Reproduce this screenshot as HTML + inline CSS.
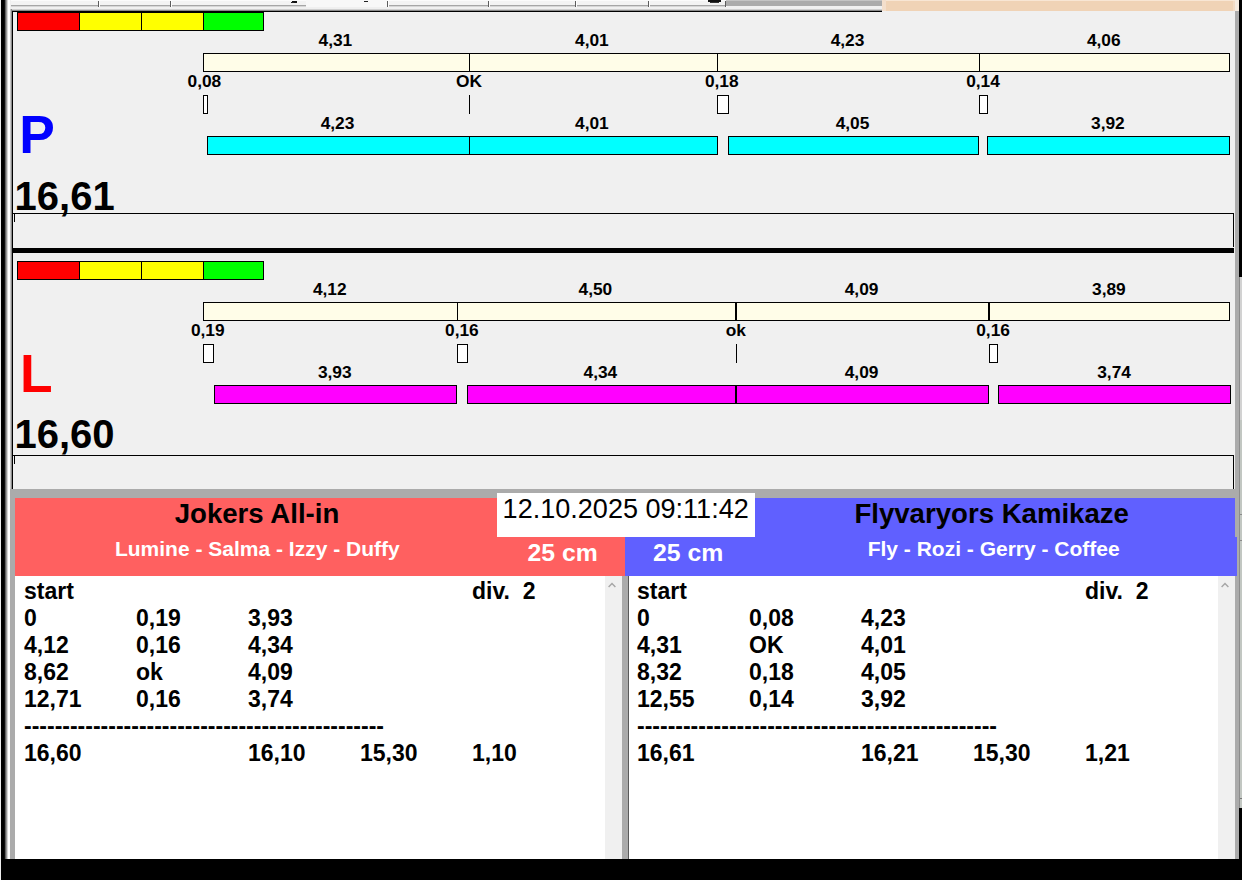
<!DOCTYPE html>
<html><head><meta charset="utf-8"><title>Timing</title>
<style>
html,body{margin:0;padding:0;background:#f0f0f0;}
body{width:1242px;height:880px;position:relative;overflow:hidden;font-family:"Liberation Sans",Arial,sans-serif;}
body>div,body>span,body>svg{position:absolute;display:block;}
.b{border:1px solid #000;}
.t{line-height:1;white-space:pre;}
</style></head><body>
<div style="left:0px;top:0px;width:1242px;height:880px;background:#f0f0f0;"></div>
<div style="left:11px;top:0px;width:716px;height:7px;background:#f3f3f3;"></div>
<div style="left:11px;top:0px;width:716px;height:1px;background:#fbfbfb;"></div>
<div style="left:11px;top:5px;width:716px;height:1px;background:#a6a6a6;"></div>
<div style="left:11px;top:6px;width:716px;height:1px;background:#d6d6d6;"></div>
<div style="left:306px;top:0px;width:81px;height:7px;background:#f8f8f8;"></div>
<div style="left:98px;top:1px;width:1px;height:6px;background:#5c5c5c;"></div>
<div style="left:99px;top:0px;width:1px;height:7px;background:#fdfdfd;"></div>
<div style="left:170px;top:1px;width:1px;height:6px;background:#5c5c5c;"></div>
<div style="left:171px;top:0px;width:1px;height:7px;background:#fdfdfd;"></div>
<div style="left:387px;top:1px;width:1px;height:6px;background:#5c5c5c;"></div>
<div style="left:388px;top:0px;width:1px;height:7px;background:#fdfdfd;"></div>
<div style="left:488px;top:1px;width:1px;height:6px;background:#5c5c5c;"></div>
<div style="left:489px;top:0px;width:1px;height:7px;background:#fdfdfd;"></div>
<div style="left:575px;top:1px;width:1px;height:6px;background:#5c5c5c;"></div>
<div style="left:576px;top:0px;width:1px;height:7px;background:#fdfdfd;"></div>
<div style="left:648px;top:1px;width:1px;height:6px;background:#5c5c5c;"></div>
<div style="left:649px;top:0px;width:1px;height:7px;background:#fdfdfd;"></div>
<div style="left:725px;top:1px;width:1px;height:6px;background:#5c5c5c;"></div>
<div style="left:726px;top:0px;width:1px;height:7px;background:#fdfdfd;"></div>
<div style="left:726px;top:0px;width:156px;height:6px;background:#ababab;"></div>
<div style="left:726px;top:0px;width:156px;height:1px;background:#c4c4c4;"></div>
<div style="left:882px;top:0px;width:353px;height:11px;background:#f0d3b6;"></div>
<div style="left:882px;top:0px;width:353px;height:1px;background:#f8e6d4;"></div>
<div style="left:882px;top:0px;width:4px;height:11px;background:#f4dfcc;"></div>
<div style="left:1235px;top:0px;width:4px;height:11px;background:#f6ebe0;"></div>
<div style="left:1233px;top:1px;width:2px;height:10px;background:#f3dcc6;"></div>
<div style="left:292px;top:1px;width:5px;height:2px;background:#111;"></div>
<div style="left:291px;top:2px;width:3px;height:1px;background:#222;"></div>
<div style="left:364px;top:1px;width:4px;height:1px;background:#222;"></div>
<div style="left:708px;top:0px;width:13px;height:2px;background:#111;"></div>
<div style="left:710px;top:2px;width:9px;height:1px;background:#333;"></div>
<div style="left:10px;top:9px;width:872px;height:1px;background:#cfcfcf;"></div>
<div style="left:10px;top:10px;width:872px;height:1px;background:#8a8a8a;"></div>
<div style="left:12px;top:11px;width:870px;height:1px;background:#000;"></div>
<div style="left:0px;top:0px;width:1px;height:880px;background:#ededed;"></div>
<div style="left:1px;top:0px;width:3px;height:880px;background:#000;"></div>
<div style="left:4px;top:0px;width:1px;height:880px;background:#0e0e0e;"></div>
<div style="left:5px;top:0px;width:1px;height:880px;background:#606060;"></div>
<div style="left:6px;top:0px;width:1px;height:880px;background:#989898;"></div>
<div style="left:7px;top:0px;width:1px;height:880px;background:#d4d4d4;"></div>
<div style="left:8px;top:0px;width:2px;height:880px;background:#fff;"></div>
<div style="left:10px;top:9px;width:1px;height:480px;background:#c6c6c6;"></div>
<div style="left:11px;top:9px;width:1px;height:480px;background:#8c8c8c;"></div>
<div style="left:12px;top:11px;width:1px;height:478px;background:#000;"></div>
<div style="left:1235px;top:11px;width:4px;height:848px;background:#ababab;"></div>
<div style="left:1239px;top:0px;width:3px;height:277px;background:#000;"></div>
<div style="left:1239px;top:277px;width:1px;height:531px;background:#8c8c8c;"></div>
<div style="left:1240px;top:277px;width:2px;height:143px;background:#d2d2d2;"></div>
<div style="left:1240px;top:420px;width:2px;height:388px;background:#c2c7c2;"></div>
<div style="left:1240px;top:514px;width:2px;height:1px;background:#8a8a8a;"></div>
<div style="left:1240px;top:540px;width:2px;height:1px;background:#8a8a8a;"></div>
<div style="left:1240px;top:798px;width:2px;height:1px;background:#777;"></div>
<div style="left:1239px;top:808px;width:3px;height:72px;background:#000;"></div>
<div class="b" style="left:17px;top:12px;width:61px;height:17px;background:#ff0000"></div>
<div class="b" style="left:79px;top:12px;width:61px;height:17px;background:#ffff00"></div>
<div class="b" style="left:141px;top:12px;width:61px;height:17px;background:#ffff00"></div>
<div class="b" style="left:203px;top:12px;width:59px;height:17px;background:#00ff00"></div>
<div class="b" style="left:203px;top:53px;width:265px;height:17px;background:#fffde8"></div>
<div class="b" style="left:469px;top:53px;width:247px;height:17px;background:#fffde8"></div>
<div class="b" style="left:717px;top:53px;width:261px;height:17px;background:#fffde8"></div>
<div class="b" style="left:979px;top:53px;width:249px;height:17px;background:#fffde8"></div>
<div class="b" style="left:203px;top:95px;width:3px;height:17px;background:#fff"></div>
<div style="left:469px;top:95px;width:1px;height:19px;background:#000;"></div>
<div class="b" style="left:717px;top:95px;width:10px;height:17px;background:#fff"></div>
<div class="b" style="left:979px;top:95px;width:7px;height:17px;background:#fff"></div>
<div class="b" style="left:207px;top:136px;width:261px;height:17px;background:#00ffff"></div>
<div class="b" style="left:469px;top:136px;width:247px;height:17px;background:#00ffff"></div>
<div class="b" style="left:728px;top:136px;width:249px;height:17px;background:#00ffff"></div>
<div class="b" style="left:987px;top:136px;width:241px;height:17px;background:#00ffff"></div>
<span class="t " style="left:135.39999999999998px;width:400px;text-align:center;top:31.63px;font-size:17.33px;color:#000;font-weight:bold;">4,31</span>
<span class="t " style="left:391.9px;width:400px;text-align:center;top:31.63px;font-size:17.33px;color:#000;font-weight:bold;">4,01</span>
<span class="t " style="left:647.5px;width:400px;text-align:center;top:31.63px;font-size:17.33px;color:#000;font-weight:bold;">4,23</span>
<span class="t " style="left:903.8px;width:400px;text-align:center;top:31.63px;font-size:17.33px;color:#000;font-weight:bold;">4,06</span>
<span class="t " style="left:4.400000000000006px;width:400px;text-align:center;top:73.13px;font-size:17.33px;color:#000;font-weight:bold;">0,08</span>
<span class="t " style="left:269px;width:400px;text-align:center;top:73.13px;font-size:17.33px;color:#000;font-weight:bold;">OK</span>
<span class="t " style="left:521.8px;width:400px;text-align:center;top:73.13px;font-size:17.33px;color:#000;font-weight:bold;">0,18</span>
<span class="t " style="left:783px;width:400px;text-align:center;top:73.13px;font-size:17.33px;color:#000;font-weight:bold;">0,14</span>
<span class="t " style="left:137.5px;width:400px;text-align:center;top:114.93px;font-size:17.33px;color:#000;font-weight:bold;">4,23</span>
<span class="t " style="left:391.9px;width:400px;text-align:center;top:114.93px;font-size:17.33px;color:#000;font-weight:bold;">4,01</span>
<span class="t " style="left:652.5px;width:400px;text-align:center;top:114.93px;font-size:17.33px;color:#000;font-weight:bold;">4,05</span>
<span class="t " style="left:907.9000000000001px;width:400px;text-align:center;top:114.93px;font-size:17.33px;color:#000;font-weight:bold;">3,92</span>
<div class="b" style="left:17px;top:261px;width:61px;height:17px;background:#ff0000"></div>
<div class="b" style="left:79px;top:261px;width:61px;height:17px;background:#ffff00"></div>
<div class="b" style="left:141px;top:261px;width:61px;height:17px;background:#ffff00"></div>
<div class="b" style="left:203px;top:261px;width:59px;height:17px;background:#00ff00"></div>
<div class="b" style="left:203px;top:302px;width:253px;height:17px;background:#fffde8"></div>
<div class="b" style="left:457px;top:302px;width:278px;height:17px;background:#fffde8"></div>
<div class="b" style="left:736px;top:302px;width:252px;height:17px;background:#fffde8"></div>
<div class="b" style="left:989px;top:302px;width:239px;height:17px;background:#fffde8"></div>
<div class="b" style="left:203px;top:344px;width:9px;height:17px;background:#fff"></div>
<div class="b" style="left:457px;top:344px;width:9px;height:17px;background:#fff"></div>
<div style="left:736px;top:344px;width:1px;height:19px;background:#000;"></div>
<div class="b" style="left:989px;top:344px;width:7px;height:17px;background:#fff"></div>
<div class="b" style="left:214px;top:385px;width:241px;height:17px;background:#ff00ff"></div>
<div class="b" style="left:467px;top:385px;width:268px;height:17px;background:#ff00ff"></div>
<div class="b" style="left:736px;top:385px;width:251px;height:17px;background:#ff00ff"></div>
<div class="b" style="left:998px;top:385px;width:231px;height:17px;background:#ff00ff"></div>
<span class="t " style="left:129.8px;width:400px;text-align:center;top:280.63px;font-size:17.33px;color:#000;font-weight:bold;">4,12</span>
<span class="t " style="left:395.4px;width:400px;text-align:center;top:280.63px;font-size:17.33px;color:#000;font-weight:bold;">4,50</span>
<span class="t " style="left:661.6px;width:400px;text-align:center;top:280.63px;font-size:17.33px;color:#000;font-weight:bold;">4,09</span>
<span class="t " style="left:908.9000000000001px;width:400px;text-align:center;top:280.63px;font-size:17.33px;color:#000;font-weight:bold;">3,89</span>
<span class="t " style="left:7.800000000000011px;width:400px;text-align:center;top:322.13px;font-size:17.33px;color:#000;font-weight:bold;">0,19</span>
<span class="t " style="left:261.9px;width:400px;text-align:center;top:322.13px;font-size:17.33px;color:#000;font-weight:bold;">0,16</span>
<span class="t " style="left:535.9px;width:400px;text-align:center;top:322.13px;font-size:17.33px;color:#000;font-weight:bold;">ok</span>
<span class="t " style="left:793.1px;width:400px;text-align:center;top:322.13px;font-size:17.33px;color:#000;font-weight:bold;">0,16</span>
<span class="t " style="left:134.8px;width:400px;text-align:center;top:363.93px;font-size:17.33px;color:#000;font-weight:bold;">3,93</span>
<span class="t " style="left:400.4px;width:400px;text-align:center;top:363.93px;font-size:17.33px;color:#000;font-weight:bold;">4,34</span>
<span class="t " style="left:661.6px;width:400px;text-align:center;top:363.93px;font-size:17.33px;color:#000;font-weight:bold;">4,09</span>
<span class="t " style="left:914.0999999999999px;width:400px;text-align:center;top:363.93px;font-size:17.33px;color:#000;font-weight:bold;">3,74</span>
<div style="left:735px;top:303px;width:2px;height:17px;background:#000;"></div>
<div style="left:988px;top:303px;width:2px;height:17px;background:#000;"></div>
<div style="left:735px;top:386px;width:2px;height:17px;background:#000;"></div>
<span class="t " style="left:19.2px;top:107.66px;font-size:53.33px;color:#0000ff;font-weight:bold;">P</span>
<span class="t " style="left:20px;top:347.36px;font-size:53.33px;color:#ff0000;font-weight:bold;">L</span>
<span class="t " style="left:14.6px;top:176.14px;font-size:40px;color:#000;font-weight:bold;">16,61</span>
<span class="t " style="left:14.4px;top:414.44px;font-size:40px;color:#000;font-weight:bold;">16,60</span>
<div style="left:13px;top:213px;width:1221px;height:1px;background:#000;"></div>
<div style="left:1233px;top:213px;width:1px;height:34px;background:#000;"></div>
<div style="left:14px;top:214px;width:1px;height:8px;background:#000;"></div>
<div style="left:13px;top:248px;width:1221px;height:5px;background:#000;"></div>
<div style="left:13px;top:455px;width:1221px;height:1px;background:#000;"></div>
<div style="left:1233px;top:455px;width:1px;height:34px;background:#000;"></div>
<div style="left:14px;top:456px;width:1px;height:8px;background:#000;"></div>
<div style="left:10px;top:489px;width:1229px;height:9px;background:#ababab;"></div>
<div style="left:10px;top:489px;width:5px;height:370px;background:#ababab;"></div>
<div style="left:15px;top:498px;width:610px;height:78px;background:#ff6060;"></div>
<div style="left:625px;top:498px;width:610px;height:78px;background:#6060ff;"></div>
<div style="left:1235px;top:537px;width:2px;height:39px;background:#6060ff;"></div>
<div style="left:497px;top:493px;width:258px;height:44px;background:#fff;"></div>
<span class="t " style="left:502.6px;top:495.70px;font-size:27.05px;color:#000;font-weight:normal;">12.10.2025 09:11:42</span>
<span class="t " style="left:57px;width:400px;text-align:center;top:499.64px;font-size:27.6px;color:#000;font-weight:bold;">Jokers All-in</span>
<span class="t " style="left:57.30000000000001px;width:400px;text-align:center;top:537.82px;font-size:21px;color:#fff;font-weight:bold;">Lumine - Salma - Izzy - Duffy</span>
<span class="t " style="left:791.7px;width:400px;text-align:center;top:499.64px;font-size:27.6px;color:#000;font-weight:bold;">Flyvaryors Kamikaze</span>
<span class="t " style="left:793.7px;width:400px;text-align:center;top:537.82px;font-size:21px;color:#fff;font-weight:bold;">Fly - Rozi - Gerry - Coffee</span>
<span class="t " style="left:527.5px;top:540.51px;font-size:24.8px;color:#fff;font-weight:bold;">25 cm</span>
<span class="t " style="left:653px;top:540.51px;font-size:24.8px;color:#fff;font-weight:bold;">25 cm</span>
<div style="left:15px;top:576px;width:590px;height:283px;background:#fff;"></div>
<div style="left:605px;top:576px;width:17px;height:283px;background:#f0f0f0;"></div>
<div style="left:622px;top:576px;width:6px;height:283px;background:#ababab;"></div>
<div style="left:628px;top:576px;width:1px;height:283px;background:#5a5a5a;"></div>
<div style="left:629px;top:576px;width:589px;height:283px;background:#fff;"></div>
<div style="left:1218px;top:576px;width:17px;height:283px;background:#f0f0f0;"></div>
<svg style="left:605.5px;top:579px" width="12" height="12" viewBox="0 0 12 12"><path d="M2.6 8 L6 4.4 L9.4 8" fill="none" stroke="#a6a6a6" stroke-width="1.4"/></svg>
<svg style="left:1218.6px;top:579px" width="12" height="12" viewBox="0 0 12 12"><path d="M2.6 8 L6 4.4 L9.4 8" fill="none" stroke="#a6a6a6" stroke-width="1.4"/></svg>
<span class="t " style="left:24px;top:580.23px;font-size:23px;color:#000;font-weight:bold;">start</span>
<span class="t " style="left:472px;top:580.23px;font-size:23px;color:#000;font-weight:bold;">div.&nbsp; 2</span>
<span class="t " style="left:24px;top:607.03px;font-size:23px;color:#000;font-weight:bold;">0</span>
<span class="t " style="left:136px;top:607.03px;font-size:23px;color:#000;font-weight:bold;">0,19</span>
<span class="t " style="left:248px;top:607.03px;font-size:23px;color:#000;font-weight:bold;">3,93</span>
<span class="t " style="left:24px;top:633.93px;font-size:23px;color:#000;font-weight:bold;">4,12</span>
<span class="t " style="left:136px;top:633.93px;font-size:23px;color:#000;font-weight:bold;">0,16</span>
<span class="t " style="left:248px;top:633.93px;font-size:23px;color:#000;font-weight:bold;">4,34</span>
<span class="t " style="left:24px;top:660.83px;font-size:23px;color:#000;font-weight:bold;">8,62</span>
<span class="t " style="left:136px;top:660.83px;font-size:23px;color:#000;font-weight:bold;">ok</span>
<span class="t " style="left:248px;top:660.83px;font-size:23px;color:#000;font-weight:bold;">4,09</span>
<span class="t " style="left:24px;top:688.13px;font-size:23px;color:#000;font-weight:bold;">12,71</span>
<span class="t " style="left:136px;top:688.13px;font-size:23px;color:#000;font-weight:bold;">0,16</span>
<span class="t " style="left:248px;top:688.13px;font-size:23px;color:#000;font-weight:bold;">3,74</span>
<span class="t " style="left:24px;top:715.23px;font-size:23px;color:#000;font-weight:bold;">-----------------------------------------------</span>
<span class="t " style="left:24px;top:742.43px;font-size:23px;color:#000;font-weight:bold;">16,60</span>
<span class="t " style="left:248px;top:742.43px;font-size:23px;color:#000;font-weight:bold;">16,10</span>
<span class="t " style="left:360px;top:742.43px;font-size:23px;color:#000;font-weight:bold;">15,30</span>
<span class="t " style="left:472px;top:742.43px;font-size:23px;color:#000;font-weight:bold;">1,10</span>
<span class="t " style="left:637px;top:580.23px;font-size:23px;color:#000;font-weight:bold;">start</span>
<span class="t " style="left:1085px;top:580.23px;font-size:23px;color:#000;font-weight:bold;">div.&nbsp; 2</span>
<span class="t " style="left:637px;top:607.03px;font-size:23px;color:#000;font-weight:bold;">0</span>
<span class="t " style="left:749px;top:607.03px;font-size:23px;color:#000;font-weight:bold;">0,08</span>
<span class="t " style="left:861px;top:607.03px;font-size:23px;color:#000;font-weight:bold;">4,23</span>
<span class="t " style="left:637px;top:633.93px;font-size:23px;color:#000;font-weight:bold;">4,31</span>
<span class="t " style="left:749px;top:633.93px;font-size:23px;color:#000;font-weight:bold;">OK</span>
<span class="t " style="left:861px;top:633.93px;font-size:23px;color:#000;font-weight:bold;">4,01</span>
<span class="t " style="left:637px;top:660.83px;font-size:23px;color:#000;font-weight:bold;">8,32</span>
<span class="t " style="left:749px;top:660.83px;font-size:23px;color:#000;font-weight:bold;">0,18</span>
<span class="t " style="left:861px;top:660.83px;font-size:23px;color:#000;font-weight:bold;">4,05</span>
<span class="t " style="left:637px;top:688.13px;font-size:23px;color:#000;font-weight:bold;">12,55</span>
<span class="t " style="left:749px;top:688.13px;font-size:23px;color:#000;font-weight:bold;">0,14</span>
<span class="t " style="left:861px;top:688.13px;font-size:23px;color:#000;font-weight:bold;">3,92</span>
<span class="t " style="left:637px;top:715.23px;font-size:23px;color:#000;font-weight:bold;">-----------------------------------------------</span>
<span class="t " style="left:637px;top:742.43px;font-size:23px;color:#000;font-weight:bold;">16,61</span>
<span class="t " style="left:861px;top:742.43px;font-size:23px;color:#000;font-weight:bold;">16,21</span>
<span class="t " style="left:973px;top:742.43px;font-size:23px;color:#000;font-weight:bold;">15,30</span>
<span class="t " style="left:1085px;top:742.43px;font-size:23px;color:#000;font-weight:bold;">1,21</span>
<div style="left:1px;top:859px;width:1241px;height:21px;background:#000;"></div>
</body></html>
